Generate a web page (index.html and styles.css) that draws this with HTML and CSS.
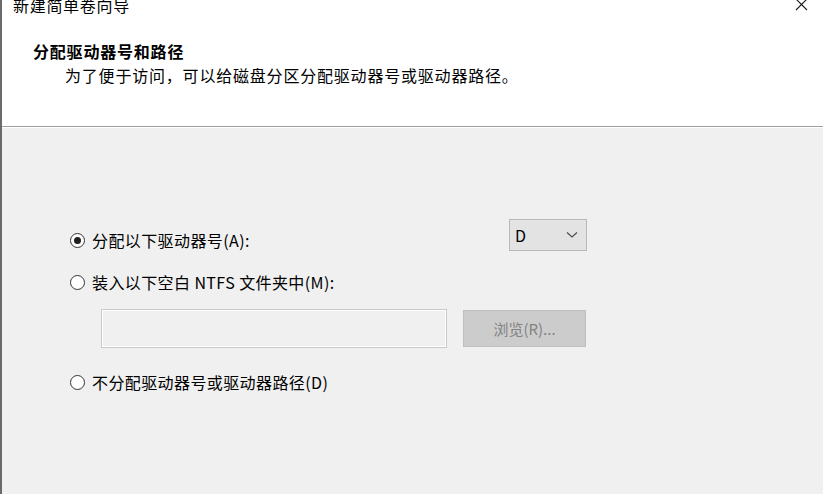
FILE: index.html
```html
<!DOCTYPE html>
<html lang="zh-CN">
<head>
<meta charset="utf-8">
<title>新建简单卷向导</title>
<link rel="stylesheet" href="styles.css">
</head>
<body>
<div class="window">
  <div class="top">
    <div class="titlebar">
      <span class="title">新建简单卷向导</span>
      <span class="close">
        <svg width="13" height="13" viewBox="0 0 13 13"><path d="M1 1 L12 12 M12 1 L1 12" stroke="#1a1a1a" stroke-width="1.1" fill="none"/></svg>
      </span>
    </div>
    <div class="header">
      <div class="h-title">分配驱动器号和路径</div>
      <div class="h-sub">为了便于访问，可以给磁盘分区分配驱动器号或驱动器路径。</div>
    </div>
  </div>
  <div class="content">
    <div class="row row-first">
      <label class="radio radio-a"><span class="dot checked"></span><span>分配以下驱动器号(A):</span></label>
      <div class="select"><span>D</span>
        <svg width="12" height="8" viewBox="0 0 12 8"><path d="M1 1.5 L6 6 L11 1.5" stroke="#4d4d4d" stroke-width="1.2" fill="none"/></svg>
      </div>
    </div>
    <label class="radio radio-b"><span class="dot"></span><span>装入以下空白 NTFS 文件夹中(M):</span></label>
    <div class="pathrow">
      <div class="textbox"></div>
      <div class="button">浏览(R)...</div>
    </div>
    <label class="radio radio-c"><span class="dot"></span><span>不分配驱动器号或驱动器路径(D)</span></label>
  </div>
</div>
</body>
</html>
```
FILE: styles.css
```css
html, body {
  margin: 0;
  padding: 0;
}
body {
  width: 823px;
  height: 494px;
  overflow: hidden;
  font-family: "Noto Sans CJK SC", "Microsoft YaHei", sans-serif;
  font-size: 16px;
  color: #000;
  background: #f0f0f0;
}
.window {
  height: 494px;
  display: flex;
  flex-direction: column;
  border-left: 2px solid #6a6a6a;
  box-sizing: border-box;
}
.top {
  background: #fff;
  height: 127px;
  border-bottom: 1px solid #a0a0a0;
  box-sizing: border-box;
  display: flex;
  flex-direction: column;
}
.titlebar {
  height: 20px;
  display: flex;
  justify-content: space-between;
  align-items: flex-start;
}
.title {
  margin-top: -6px;
  margin-left: 11px;
  line-height: 22px;
  letter-spacing: 0.7px;
}
.close {
  margin-top: -2px;
  margin-right: 15px;
  display: flex;
}
.header {
  padding-left: 31px;
  padding-top: 20px;
}
.h-title {
  font-weight: bold;
  line-height: 22px;
  letter-spacing: 0.8px;
}
.h-sub {
  padding-left: 32px;
  line-height: 22px;
  margin-top: 2px;
  letter-spacing: 0.8px;
}
.content {
  flex: 1;
  border-top: 1px solid #fff;
  padding-left: 68px;
  display: flex;
  flex-direction: column;
  align-items: flex-start;
}
.row-first {
  display: flex;
  align-items: flex-start;
  margin-top: 91px;
}
.radio {
  display: flex;
  align-items: center;
  gap: 7px;
  line-height: 20px;
  letter-spacing: 0.4px;
}
.radio-a {
  margin-top: 11px;
  width: 439px;
}
.radio-b {
  margin-top: 21px;
}
.radio-c {
  margin-top: 24px;
}
.dot {
  width: 15px;
  height: 15px;
  border: 1.2px solid #333;
  border-radius: 50%;
  box-sizing: border-box;
  display: flex;
  align-items: center;
  justify-content: center;
  background: #fff;
}
.dot.checked::after {
  content: "";
  width: 7px;
  height: 7px;
  border-radius: 50%;
  background: #1f1f1f;
}
.select {
  width: 78px;
  height: 32px;
  background: #e3e3e3;
  border: 1px solid #b8b8b8;
  box-sizing: border-box;
  display: flex;
  align-items: center;
  justify-content: space-between;
  padding: 0 8px 0 5px;
  line-height: 20px;
}
.pathrow {
  display: flex;
  align-items: flex-start;
  gap: 16px;
  margin-top: 17px;
  margin-left: 31px;
}
.textbox {
  width: 346px;
  height: 39px;
  border: 1px solid #c9c9c9;
  box-shadow: inset 0 0 0 1px #fff;
  background: #f0f0f0;
  box-sizing: border-box;
}
.button {
  width: 123px;
  height: 37px;
  margin-top: 1px;
  background: #cccccc;
  border: 1px solid #bfbfbf;
  box-sizing: border-box;
  color: #838383;
  display: flex;
  align-items: center;
  justify-content: center;
  font-size: 15px;
}
```
